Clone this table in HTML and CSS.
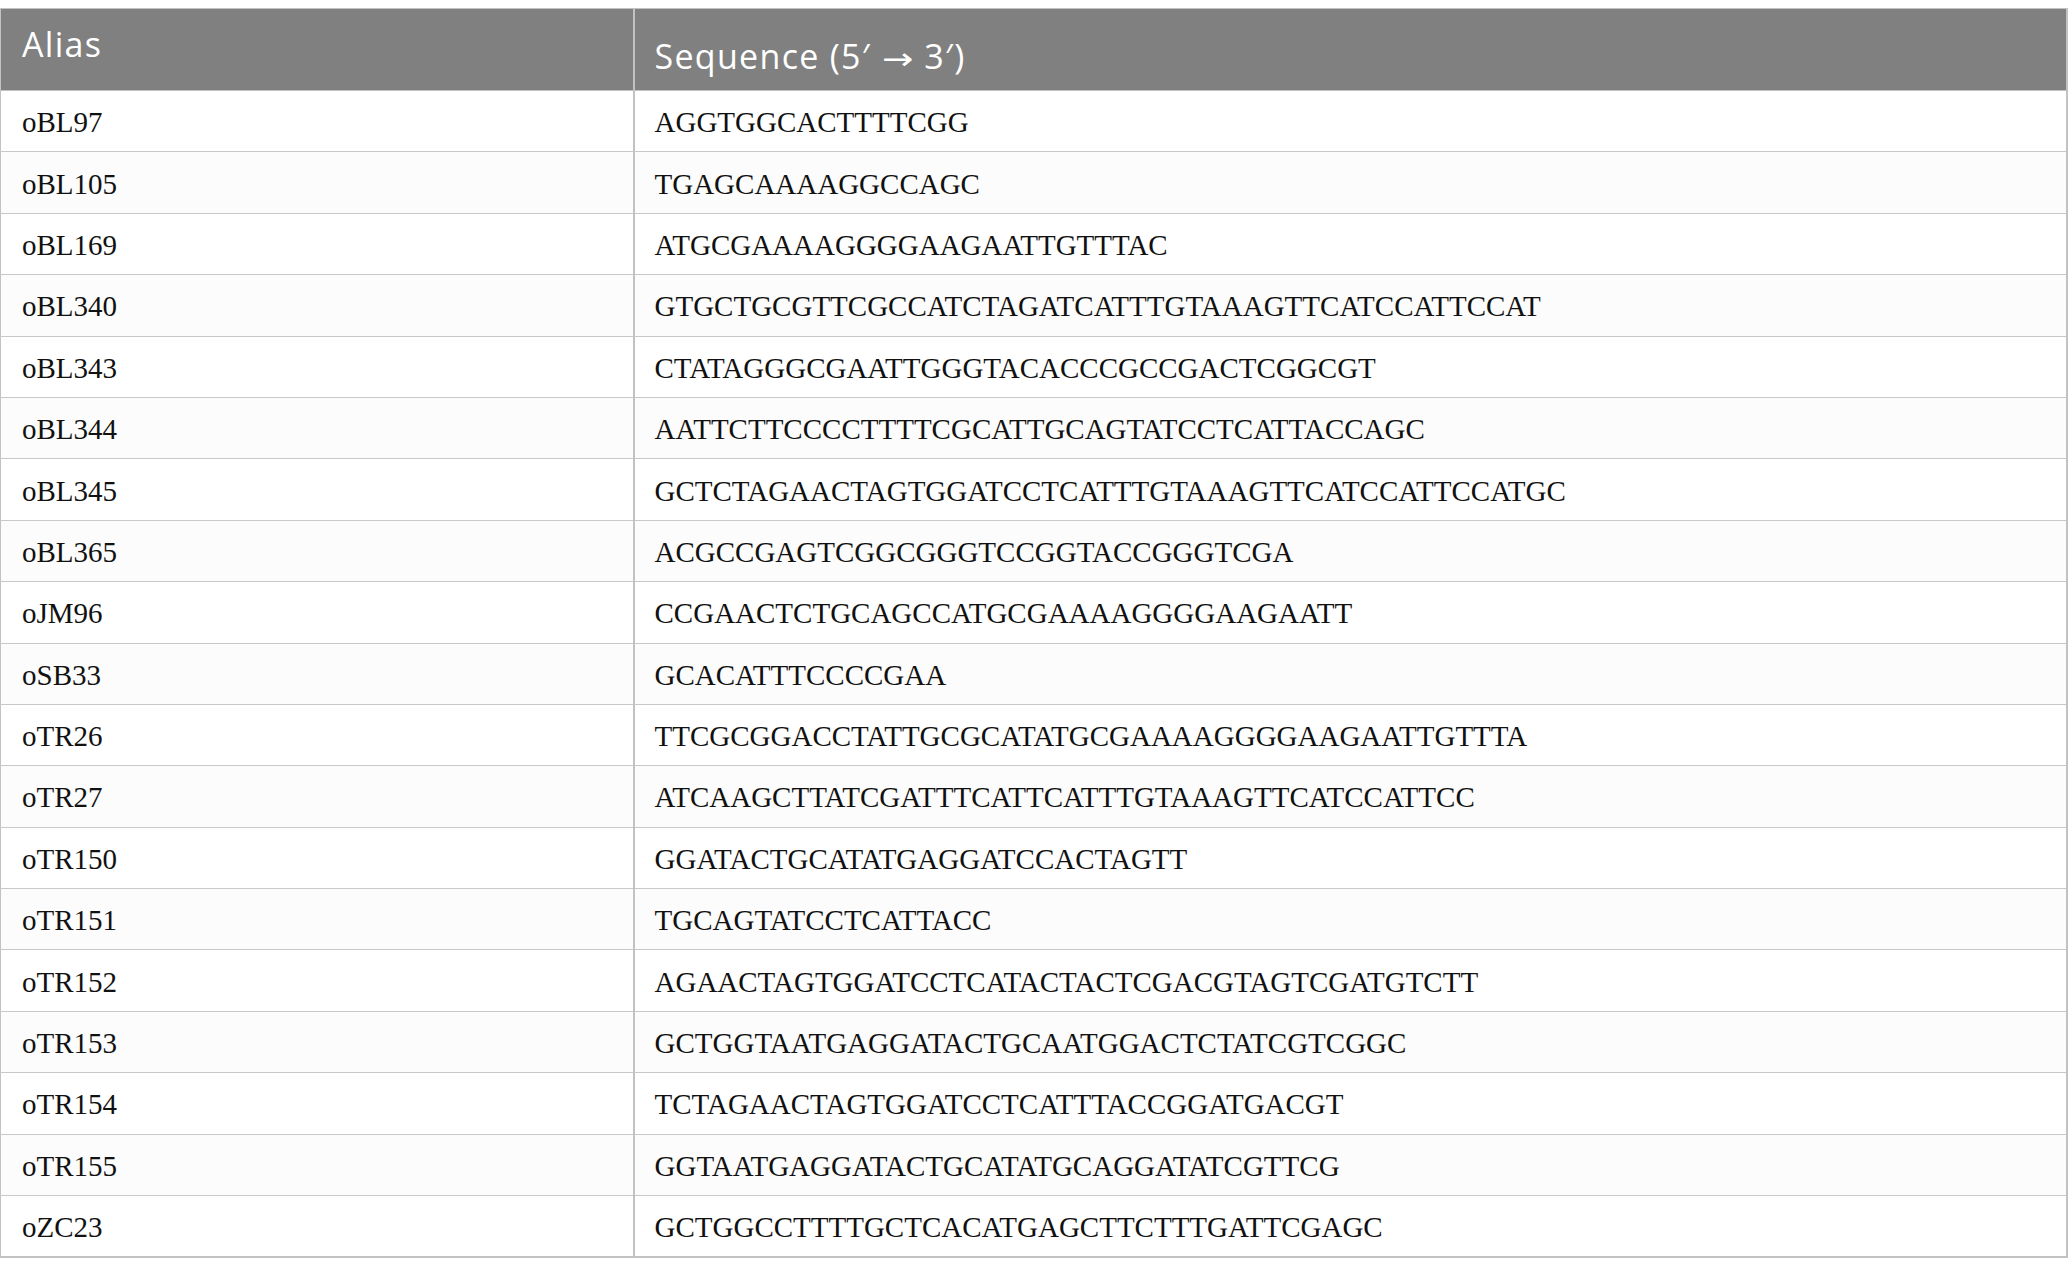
FILE: index.html
```html
<!DOCTYPE html>
<html lang="en">
<head>
<meta charset="utf-8">
<title>Primers</title>
<link rel="stylesheet" href="styles.css">
</head>
<body>
<table class="primers">
  <thead>
    <tr>
      <th class="h-alias">Alias</th>
      <th class="h-seq">Sequence (5′ <span class="arrow">→</span> 3′)</th>
    </tr>
  </thead>
  <tbody>
    <tr><td>oBL97</td><td>AGGTGGCACTTTTCGG</td></tr>
    <tr><td>oBL105</td><td>TGAGCAAAAGGCCAGC</td></tr>
    <tr><td>oBL169</td><td>ATGCGAAAAGGGGAAGAATTGTTTAC</td></tr>
    <tr><td>oBL340</td><td>GTGCTGCGTTCGCCATCTAGATCATTTGTAAAGTTCATCCATTCCAT</td></tr>
    <tr><td>oBL343</td><td>CTATAGGGCGAATTGGGTACACCCGCCGACTCGGCGT</td></tr>
    <tr><td>oBL344</td><td>AATTCTTCCCCTTTTCGCATTGCAGTATCCTCATTACCAGC</td></tr>
    <tr><td>oBL345</td><td>GCTCTAGAACTAGTGGATCCTCATTTGTAAAGTTCATCCATTCCATGC</td></tr>
    <tr><td>oBL365</td><td>ACGCCGAGTCGGCGGGTCCGGTACCGGGTCGA</td></tr>
    <tr><td>oJM96</td><td>CCGAACTCTGCAGCCATGCGAAAAGGGGAAGAATT</td></tr>
    <tr><td>oSB33</td><td>GCACATTTCCCCGAA</td></tr>
    <tr><td>oTR26</td><td>TTCGCGGACCTATTGCGCATATGCGAAAAGGGGAAGAATTGTTTA</td></tr>
    <tr><td>oTR27</td><td>ATCAAGCTTATCGATTTCATTCATTTGTAAAGTTCATCCATTCC</td></tr>
    <tr><td>oTR150</td><td>GGATACTGCATATGAGGATCCACTAGTT</td></tr>
    <tr><td>oTR151</td><td>TGCAGTATCCTCATTACC</td></tr>
    <tr><td>oTR152</td><td>AGAACTAGTGGATCCTCATACTACTCGACGTAGTCGATGTCTT</td></tr>
    <tr><td>oTR153</td><td>GCTGGTAATGAGGATACTGCAATGGACTCTATCGTCGGC</td></tr>
    <tr><td>oTR154</td><td>TCTAGAACTAGTGGATCCTCATTTACCGGATGACGT</td></tr>
    <tr><td>oTR155</td><td>GGTAATGAGGATACTGCATATGCAGGATATCGTTCG</td></tr>
    <tr><td>oZC23</td><td>GCTGGCCTTTTGCTCACATGAGCTTCTTTGATTCGAGC</td></tr>
  </tbody>
</table>
</body>
</html>
```

FILE: styles.css
```css
html, body {
  margin: 0;
  padding: 0;
  background: #ffffff;
}

body {
  padding-top: 8px;
}

.primers {
  width: 2068px;
  border-collapse: collapse;
  table-layout: fixed;
  border-left: 1px solid #c2c2c2;
  border-right: 2px solid #c2c2c2;
  border-top: 1px solid #c2c2c2;
  border-bottom: 2px solid #c2c2c2;
}

.primers th {
  background: #7f807f;
  color: #ffffff;
  font-family: "Open Sans", "DejaVu Sans", sans-serif;
  font-weight: 400;
  font-size: 34px;
  letter-spacing: 1.3px;
  line-height: 46px;
  text-align: left;
  vertical-align: top;
  padding: 0 20px;
  height: 82px;
  box-sizing: border-box;
  border-bottom: 1px solid #c2c2c2;
}

.primers th.h-alias {
  width: 633px;
  padding-top: 12px;
  padding-left: 21px;
  border-right: 2px solid #c2c2c2;
}

.primers th.h-seq {
  padding-top: 24px;
}

.primers th .arrow {
  font-family: "DejaVu Sans", sans-serif;
  font-size: 30px;
  letter-spacing: 0;
  display: inline-block;
  transform: scaleX(1.25);
  margin: 0 4px;
}

.primers td {
  font-family: "Liberation Serif", "Times New Roman", serif;
  font-size: 29px;
  color: #111111;
  height: 61.4px;
  padding: 3px 20px 0 20px;
  box-sizing: border-box;
  vertical-align: middle;
  border-bottom: 1px solid #c8c8c8;
  white-space: nowrap;
}

.primers td:first-child {
  padding-left: 21px;
  border-right: 2px solid #c2c2c2;
}

.primers tbody tr:nth-child(even) td {
  background: #fcfcfc;
}
```
